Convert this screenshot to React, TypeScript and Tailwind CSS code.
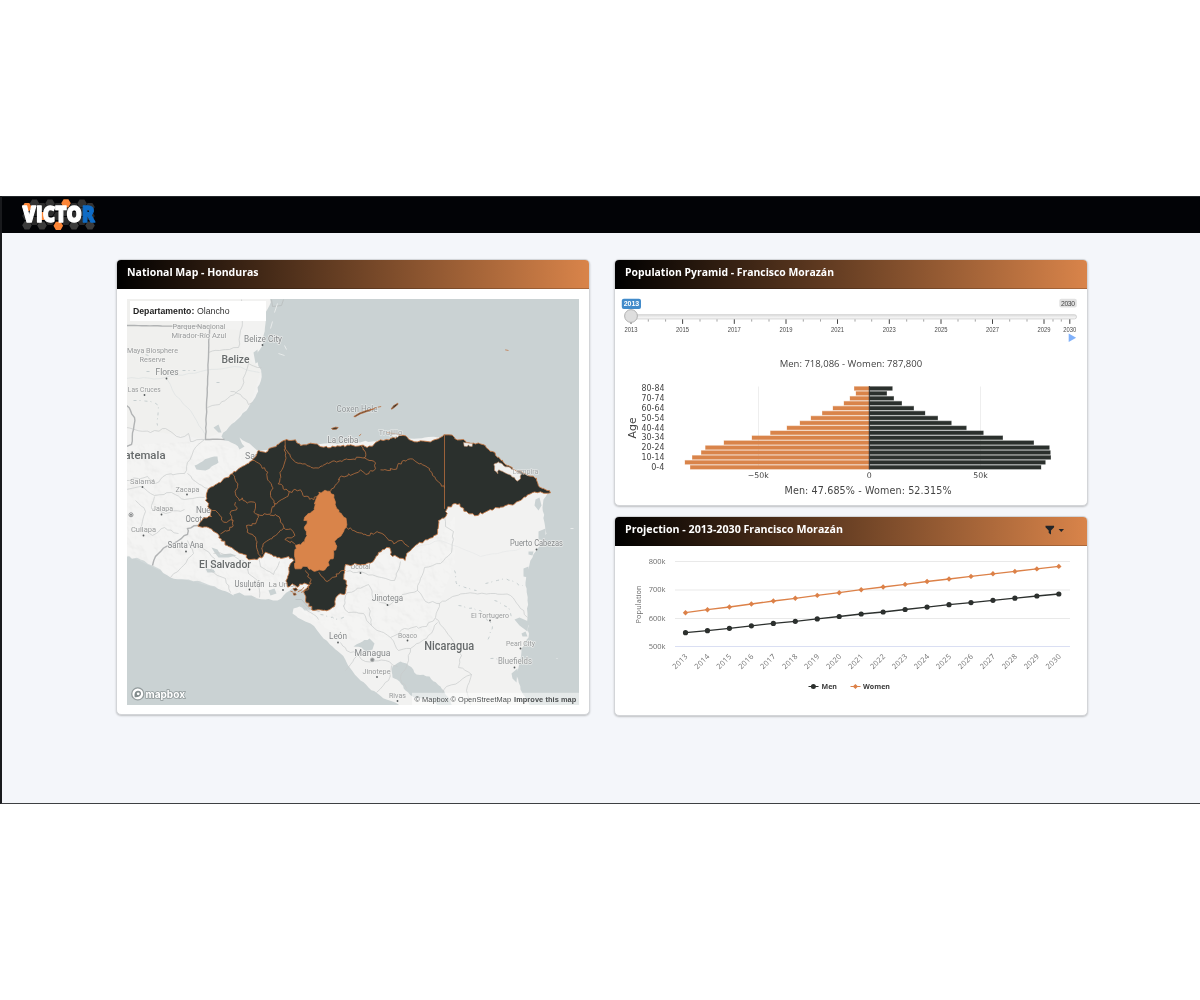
import React from "react";

type Pt = [number, number];

/** Turns "x,y x,y" into a slightly irregular path, the way natural borders run. */
function rough(src: string, amp = 3, closed = false, step = 11): string {
  const pts: Pt[] = src.trim().split(/\s+/).map((p) => p.split(",").map(Number) as Pt);
  if (closed) pts.push(pts[0]);
  let seed = Math.round(pts[0][0] * 13 + pts[0][1] * 7) + 5;
  const rnd = () => {
    seed = (seed * 16807) % 2147483647;
    return (seed % 1000) / 1000 - 0.5;
  };
  let d = `M${pts[0][0]} ${pts[0][1]}`;
  for (let i = 1; i < pts.length; i++) {
    const [ax, ay] = pts[i - 1];
    const [bx, by] = pts[i];
    const n = Math.max(1, Math.round(Math.hypot(bx - ax, by - ay) / step));
    for (let k = 1; k <= n; k++) {
      const j = k === n ? 0 : amp;
      d += `L${(ax + ((bx - ax) * k) / n + rnd() * j * 2).toFixed(1)} ${(ay + ((by - ay) * k) / n + rnd() * j * 2).toFixed(1)}`;
    }
  }
  return closed ? d + "Z" : d;
}

const LAND_N =
  "120,290 271,290 269,305 265,312 265,323 263,335 262,345 257,352 256,359 261,373 259,384 256,394 248,407 238,418 228,427 221,436 224,440 235,444 239,449 244,446 239,437 249,443 258,451 300,445 445,436 548,491 543,499 542,507 546,533 537,548 532,557 526,573 525,585 527,600 527,613 528,637 521,648 519,660 516,675 520,689 527,700 532,712 404,712 398,704 386,699 377,693 368,687 360,680 350,668 340,653 332,646 323,638 316,629 310,623 301,619 292,613 293,608 299,606 304,610 313,609 308,600 303,590 293,587 283,595 277,600 257,598 245,596 233,595 222,590 210,585 200,581 185,579 170,577 160,569 152,565 140,559 120,555";

const HONDURAS =
  "52,317 70,292 93,288 92,270 75,240 82,208 110,190 155,160 185,138 215,120 235,90 255,96 272,82 290,72 318,57 330,60 345,58 360,75 390,68 430,80 480,77 540,75 560,81 580,72 600,58 630,54 669,45 705,64 740,63 765,57 790,43 805,43 840,58 880,68 910,73 945,104 980,135 1030,160 1068,173 1078,200 1110,217 1080,214 1050,220 1020,240 1000,252 960,260 920,272 890,285 870,280 850,272 838,250 820,250 800,265 796,288 774,300 770,342 735,358 700,380 678,400 674,420 652,410 630,402 628,382 605,388 575,425 545,432 495,432 490,470 500,495 495,518 475,522 465,535 462,558 448,567 400,570 375,540 370,517 388,495 372,488 350,500 335,490 322,500 316,482 325,460 325,440 340,420 325,408 290,412 255,395 243,412 205,418 190,402 165,390 140,375 115,352 112,340 85,322";

const DEPTS = [
  "318,57 311,88 316,110 303,150 293,190 325,213 322,228 283,250 268,280",
  "345,125 323,98 313,75",
  "345,125 375,130 400,143 425,138 440,127 490,118 545,112 580,122 585,145",
  "540,75 555,95 550,112",
  "585,145 556,162 540,148 520,160 480,168 468,190 450,213",
  "600,148 640,147 665,122 690,115 740,140 765,175 792,203",
  "215,120 240,132 262,155 263,180 278,202 270,225 285,250",
  "155,160 172,190 165,220 176,240 185,232 200,248 222,245 220,275 232,282 285,282 300,298 310,322 330,325 343,345 313,357 345,372",
  "165,245 168,268 150,275 158,300 130,305 105,270 92,268",
  "158,300 155,320 120,340",
  "232,282 225,310 198,315 200,335 225,350 228,380 242,410",
  "310,322 285,345 248,370 245,400",
  "325,213 360,208 370,228 400,238 415,225",
  "497,320 520,330 560,345 590,333 615,348 640,370 665,360 685,380",
  "375,450 392,478 385,505 368,512",
  "415,455 440,483 460,470 485,450 495,450",
];

const MORAZAN =
  "415,215 440,212 452,220 460,232 464,252 475,275 490,290 497,320 484,342 468,356 466,372 460,400 458,415 443,425 440,438 428,450 400,452 380,438 362,445 342,438 342,400 345,375 372,365 380,345 372,325 380,308 370,300 382,280 402,268 405,240";

const BORDERS = [
  "126,325 208,326",
  "126,446 131,444 133,429 134,417 130,410 126,405",
  "224,439 205,439 209,325",
  "152,565 155,556 166,546 178,540 187,534 187,528 198,525",
];

const REGIONS = [
  "208,352 219,350 229,349 238,347 240,330 243,312 241,299",
  "207,407 219,404 227,398 240,389 248,363 257,367 261,367",
  "230,391 240,394 248,404 252,402",
  "126,427 150,432 165,428 180,437 188,433 190,441 204,439",
  "204,439 193,450 187,462 184,473 166,474 155,483 147,476 126,480",
  "187,473 195,481 208,488",
  "126,489 140,486 154,495 171,492 184,499 204,497",
  "135,500 145,511 140,528 152,535 164,527 178,533",
  "154,496 151,508 165,513 184,509",
  "187,540 193,553 183,565 170,577",
  "192,542 204,549 214,558 210,570 225,578 230,592",
  "213,553 231,554 243,560 248,573 257,580 259,597",
  "259,552 260,566 273,574 279,561",
  "346,571 360,571 381,577 394,580 400,561",
  "443,510 445,526 453,531 451,552 440,563 424,567 420,578 417,590 425,601 439,603 449,598 465,593 490,593 510,595 520,608 527,617",
  "417,590 402,594 388,605 373,599 368,584 347,592 343,606",
  "439,603 435,617 426,626 404,628 390,637 371,625 368,607",
  "343,605 348,612 363,613 371,625",
  "435,618 445,630 453,641 461,655 458,667 471,674 459,681 446,686 439,695",
  "390,637 398,650 410,648 408,660 400,678 406,688",
  "340,642 346,650 356,653 365,661 385,660 397,666",
  "345,670 357,655",
  "376,692 388,680 391,665",
  "410,648 426,638 437,622",
  "471,674 466,690 470,704",
  "301,604 310,612 318,619",
];

type Label = [string, number, number, number, number, "c" | "t" | "s"];
/* text, centre x, baseline y, width, size, tone */
const LABELS: Label[] = [
  ["Belize", 235, 362, 28, 11, "c"],
  ["Nicaragua", 448.7, 649, 50, 12, "c"],
  ["El Salvador", 224.5, 567.5, 52, 11, "c"],
  ["Parque Nacional", 198.5, 328, 53, 8, "t"],
  ["Mirador-Río Azul", 198.5, 337, 55, 8, "t"],
  ["Belize City", 262.5, 341, 38, 8.8, "s"],
  ["Maya Biosphere", 152, 352, 51, 8, "t"],
  ["Reserve", 152, 361, 26, 8, "t"],
  ["Flores", 166.5, 374.5, 23, 8.8, "s"],
  ["Las Cruces", 143.8, 391, 33, 7.8, "t"],
  ["Salamá", 142, 483, 25, 8, "t"],
  ["Zacapa", 187, 491, 24, 8, "t"],
  ["Jalapa", 162, 510, 21, 8, "t"],
  ["Cuilapa", 143, 531, 25, 8, "t"],
  ["Santa Ana", 185, 547.5, 36, 8.8, "s"],
  ["Usulután", 249, 586, 30, 8.3, "s"],
  ["León", 337.5, 638.5, 18, 8.8, "s"],
  ["Managua", 372, 655, 36, 9.5, "s"],
  ["Jinotepe", 376, 673.5, 28, 8, "t"],
  ["Rivas", 397, 697, 17, 8, "t"],
  ["Boaco", 407, 637, 19, 7.6, "t"],
  ["Jinotega", 387, 600.5, 31, 8.8, "s"],
  ["El Tortugero", 489.5, 617, 38, 7.8, "t"],
  ["Puerto Cabezas", 536, 545.5, 53, 8.3, "s"],
  ["Pearl City", 520, 645, 29, 7.8, "t"],
  ["Bluefields", 514.5, 663, 34, 8.2, "t"],
];
const UNDER: Label[] = [
  ["San", 252, 458.5, 15, 8.8, "s"],
  ["Nueva", 207, 512, 23, 8.8, "s"],
  ["Ocotepeque", 206, 521, 42, 8.8, "s"],
  ["La Unión", 283, 586, 30, 8, "t"],
  ["Ocotal", 360, 568.5, 20, 8, "t"],
];
const OVER: Label[] = [
  ["La Ceiba", 342.5, 442, 31, 8.5, "s"],
  ["Trujillo", 390, 434, 24, 8, "t"],
  ["Lempira", 525, 473.5, 26, 8, "t"],
];

const DOTS: Pt[] = [
  [262, 344.5], [166, 378], [144, 394.5], [142, 486.5], [186.5, 494], [161, 514], [143, 535], [185.5, 551],
  [249, 589], [282.5, 589.5], [337.5, 642], [376.5, 676.5], [397, 700.5], [407, 640], [387, 604.5],
  [489.5, 620], [536, 549], [520, 648], [514, 667], [360, 572.5],
];

function MapLabel({ l }: { l: Label }) {
  const [t, x, y, w, s, tone] = l;
  return (
    <text
      x={x - w / 2}
      y={y}
      textLength={w}
      lengthAdjust="spacingAndGlyphs"
      fontSize={s}
      fontFamily="Roboto, sans-serif"
      fontWeight={tone === "c" ? 500 : 400}
      fill={tone === "c" ? "#666a6b" : tone === "s" ? "#85888a" : "#999b9c"}
      stroke="#f5f5f4"
      strokeOpacity={0.7}
      strokeWidth={1.6}
      paintOrder="stroke"
      strokeLinejoin="round"
    >
      {t}
    </text>
  );
}

function HondurasMap() {
  return (
    <svg className="block h-[406px] w-[452px]" viewBox="126.5 298.5 452 406">
      <defs>
        <filter id="relief" x="0" y="0" width="100%" height="100%">
          <feTurbulence type="fractalNoise" baseFrequency="0.07" numOctaves="4" seed="8" />
          <feDiffuseLighting lightingColor="#ffffff" surfaceScale="2.4" diffuseConstant="1.1">
            <feDistantLight azimuth="315" elevation="60" />
          </feDiffuseLighting>
        </filter>
        <clipPath id="highlands">
          <path d="M126 445L205 440L255 455L210 490L200 525L235 555L285 560L283 593L233 592L170 575L126 554Z" />
          <path d="M345 570L385 553L402 560L440 535L455 515L455 560L440 600L430 640L400 640L350 640L320 625L300 610L345 600Z" />
        </clipPath>
      </defs>
      <rect x="126" y="298" width="453" height="407" fill="#cad2d3" />
      <path d={rough(LAND_N, 0.9, true, 4)} fill="#f2f2f1" />
      <path
        d="M208 326L240 330L240 350L261 370L250 403L225 430L206 438Z M126 298h82v141l-82-12Z"
        fill="#eeeeed"
        opacity="0.6"
      />
      <g clipPath="url(#highlands)">
        <rect x="126" y="430" width="340" height="230" filter="url(#relief)" opacity="0.16" style={{ mixBlendMode: "multiply" }} />
      </g>
      <g fill="#cad2d3">
        <path d={rough("194,465 200,462 207,458 217,456 218,462 211,466 205,470 196,469", 0.8, true, 3)} />
        <path d={rough("353,646 362,641 369,638 374,643 372,649 366,652 361,647", 0.8, true, 3)} />
        <path d={rough("392,666 400,661 408,665 416,674 429,676 440,686 448,697 452,706 440,706 428,698 415,698 405,690 399,681 392,677", 0.8, true, 3)} />
        <path d="M211 547l6 2 3 5 10-1 6 2-8 2-10 0-4-5Z M205 568l8 1 2 3-8 0Z M213 427l5-3 3 8-3 0Z M253 352l4-3 1 12-3 2Z" />
        <path d="M535 499l4-2 2 8-3 5-4-5Z M538 531l7-3 0 12-7-1Z M523 568l5-2 0 11-5-1Z M528 551l5 0-1 4-4-1Z M514 619l5-2 9 4-1 10-8-6Z M511 673l6-5-1 14-4-4Z M521 633l4-2 2 5-5 0Z" />
        <path d="M233 594l6-2 5 3 7 0 6 3-8 1-16-2Z M268 590l6-2 2 5-6 2Z" />
      </g>
      <g fill="none" stroke="#dfe3e3" strokeWidth="0.8">
        <path d={rough("126,378 160,378 200,371 234,366 259,372", 1, false, 6)} />
        <path d={rough("166,378 175,395 190,410 205,435", 1, false, 6)} />
        <path d={rough("405,550 440,540 480,556 520,548", 1, false, 6)} stroke="#e9eaea" />
      </g>
      <g fill="none" stroke="#c9cbcc" strokeWidth="0.7">
        {REGIONS.map((r) => (
          <path key={r} d={rough(r, 1.1, false, 4)} />
        ))}
      </g>
      <g fill="none" stroke="#c1cacb" strokeWidth="0.9" strokeDasharray="3 3 1 4">
        <path d={rough("133,400 150,401 158,405 157,425", 1, false, 4)} />
        <path d={rough("454,570 457,585 476,590", 1, false, 4)} />
        <path d={rough("485,583 505,578 522,585", 1, false, 4)} />
        <path d={rough("458,605 480,610 492,625 487,640", 1, false, 4)} />
        <path d={rough("494,600 508,607 512,618", 1, false, 4)} />
        <path d={rough("490,658 505,661 517,659", 1, false, 4)} />
        <path d={rough("320,614 335,619 345,616", 1, false, 4)} />
        <path d="M146 371h6M171 370h24M216 382h6M148 355l-10-3" />
      </g>
      <g fill="none" stroke="#b1b3b4" strokeWidth="1.4">
        {BORDERS.map((r, i) => (
          <path key={r} d={rough(r, i === 0 ? 0.1 : i === 2 ? 0.3 : 0.9, false, 4)} />
        ))}
      </g>
      <g fill="none" stroke="#b9bdbe" strokeWidth="0.8">
        <path d="M271 299l1 7 9-1 2-6" />
        <path d="M295 599h6l8 9 10 3" />
      </g>
      <g fill="none" stroke="#e8ebeb" strokeWidth="1">
        <path d="M277 303l-3 9M272 321l-2 7M284 345l2 4M278 353l6 2M570 528h3M556 658h1" />
      </g>

      {UNDER.map((l) => <MapLabel key={l[0]} l={l} />)}
      {LABELS.map((l) => <MapLabel key={l[0]} l={l} />)}
      <text x="124" y="458" textLength="41" lengthAdjust="spacingAndGlyphs" fontSize="11" fontWeight="500" fontFamily="Roboto, sans-serif" fill="#666a6b">
        atemala
      </text>
      <text x="336" y="411" textLength="41" lengthAdjust="spacingAndGlyphs" fontSize="8.5" fontFamily="Roboto, sans-serif" fill="#919698" stroke="#e3e7e7" strokeWidth="1.2" paintOrder="stroke">
        Coxen Hole
      </text>
      {DOTS.map(([x, y]) => (
        <circle key={`${x}-${y}`} cx={x} cy={y} r="0.9" fill="#55595a" />
      ))}
      <circle cx="130.5" cy="514.3" r="2" fill="#fff" stroke="#77797a" strokeWidth="0.8" />
      <circle cx="130.5" cy="514.3" r="0.9" fill="#55595a" />
      <circle cx="371.8" cy="659.3" r="1.9" fill="#8b8e8f" stroke="#b5b7b8" strokeWidth="0.8" />

      <g transform="translate(180 420) scale(0.33333)" strokeLinejoin="round">
        <path d={rough(HONDURAS, 3.6, true, 7)} fill="#2b302d" stroke="#c97a45" strokeWidth="2.6" />
        <g fill="none" stroke="#b56d3d" strokeWidth="2.5">
          {DEPTS.map((r) => (
            <path key={r} d={rough(r, 4, false, 7)} />
          ))}
          <path d="M792 43V265" />
        </g>
        <path d={rough(MORAZAN, 5, true, 8)} fill="#d9844a" stroke="#d9844a" strokeWidth="2" />
        <g fill="#2b302d" stroke="#b96c3b" strokeWidth="2.4">
          <path d="M338 505l9-3 4 6-8 4ZM338 518l7 0 2 5-7 1Z" />
          <path d="M352 514l13-7 5-7M362 516l12-6M330 512l8 3" fill="none" />
          <path d="M453 24l12-4 8 1-5 5-11 1Z" />
          <path d="M520 -12l16 -10 22 -8 22 -5-20 8-20 7-16 9Z" />
          <path d="M580 -36l8-3M592 -40l10-2M536 46l6-5" fill="none" />
          <path d="M632 -35l8 -10 12 -7 0 4-8 7-10 7Z" />
          <path d="M620 36l30 5 20 4" fill="none" />
        </g>
        <path d="M974 -212l10 2" stroke="#c48c66" strokeWidth="3" />
        <path d="M634 44l6 6 8-4 3 6 4-7-9-5Z" fill="#ececeb" />
        <path
          d={rough("940,132 953,124 962,128 975,139 990,142 1010,153 1022,162 1020,175 1010,182 998,170 985,162 965,152 955,148 952,160 942,150", 2, true, 6)}
          fill="#f0f0ef"
          stroke="#c58a62"
          strokeWidth="1.8"
        />
        <path d="M849 66l27 3-1 9-8-1-3-4-4 5-9-1Z" fill="#f0f0ef" stroke="#c58a62" strokeWidth="1.5" />
      </g>
      {OVER.map((l) => (
        <g key={l[0]} opacity={l[0] === "La Ceiba" ? 1 : 0.75}>
          <MapLabel l={l} />
        </g>
      ))}

      <g stroke="#7b8485" strokeOpacity="0.75" strokeWidth="1.3" fill="#fff">
        <circle cx="137.3" cy="693.4" r="6" />
        <path d="M134.2 696.7c-.6-3.3.2-6 3-6.4 2.4-.3 3.8 1.5 3.3 3.5-.6 2.3-3.4 3.3-6.3 2.9Z" fill="#828b8c" stroke="none" />
        <circle cx="137.7" cy="693.3" r="1.4" stroke="none" />
        <text x="145" y="697" textLength="39.5" lengthAdjust="spacingAndGlyphs" fontFamily="Inter, sans-serif" fontWeight="700" fontSize="10.5" strokeWidth="1.5" paintOrder="stroke">
          mapbox
        </text>
      </g>
      <rect x="411.5" y="692.3" width="167.5" height="12.4" fill="#fff" fillOpacity="0.5" />
      <g fontFamily="Liberation Sans, sans-serif" fontSize="7.4" fill="#4c4f50">
        <text x="414" y="701" textLength="34">© Mapbox</text>
        <text x="450" y="701" textLength="60.5">© OpenStreetMap</text>
        <text x="513.5" y="701" textLength="62.3" fontWeight="700">Improve this map</text>
      </g>
    </svg>
  );
}

const HEXES: [number, number, string][] = [
  [27, 207, "#fb8537"], [34.5, 203.5, "#333"], [42, 207, "#2b2b2b"], [50, 203.5, "#333"], [58, 207, "#2b2b2b"],
  [66, 203.3, "#fb8537"], [74, 207, "#2b2b2b"], [82, 203.5, "#333"], [90, 207, "#333"],
  [27, 216, "#2b2b2b"], [34.5, 212, "#222"], [42, 216, "#fb8537"], [50, 212, "#2b2b2b"], [58, 216, "#2b2b2b"],
  [66, 212, "#333"], [74, 216, "#2b2b2b"], [82, 212, "#333"], [90, 216, "#2b2b2b"],
  [27, 225.3, "#3b3b3b"], [42, 225.5, "#3b3b3b"], [34.5, 221, "#2b2b2b"], [50, 221, "#2b2b2b"],
  [58.3, 225.8, "#fb8537"], [66, 221, "#2b2b2b"], [74, 225.5, "#3b3b3b"], [82, 221, "#2b2b2b"], [90, 225.5, "#3b3b3b"],
];

function Logo() {
  return (
    <svg className="h-[34px] w-[80px]" viewBox="20 198 80 34">
      {HEXES.map(([x, y, c]) => (
        <path key={`${x}-${y}`} d={`M${x - 4.8} ${y}l2.4-4.1h4.8l2.4 4.1-2.4 4.1h-4.8Z`} fill={c} />
      ))}
      <text
        x="22.6"
        y="222.4"
        textLength="72.3"
        lengthAdjust="spacingAndGlyphs"
        fontFamily="Open Sans, sans-serif"
        fontWeight="800"
        fontSize="22.6"
        strokeWidth="1.3"
        strokeLinejoin="round"
        fill="#fff"
        stroke="#fff"
      >
        VICTO
        <tspan fill="#0f6cc6" stroke="#0f6cc6">R</tspan>
      </text>
    </svg>
  );
}

function Card({ title, width, className, action, children }: { title: string; width: number; className: string; action?: React.ReactNode; children: React.ReactNode }) {
  return (
    <section className={`flex w-[474px] flex-col overflow-hidden rounded-[5px] border border-[#d3d5d8] bg-white shadow-[0_1px_2px_rgba(0,0,0,0.22)] ${className}`}>
      <header className="flex h-[29px] shrink-0 items-center justify-between border-b border-black/20 bg-[linear-gradient(90deg,#000000,#d9844a)] pr-[22px] pl-[10px]">
        <h2 className="mb-[5px]">
          <svg className="block h-[16px] w-[260px]" viewBox="0 0 260 16">
            <text x="0" y="11.5" textLength={width} lengthAdjust="spacingAndGlyphs" fontFamily="Open Sans, Noto Sans, sans-serif" fontWeight="700" fontSize="11" fill="#fff">
              {title}
            </text>
          </svg>
        </h2>
        {action}
      </header>
      {children}
    </section>
  );
}

const TICKS = [
  [631, "2013"], [682.6, "2015"], [734.3, "2017"], [786, "2019"], [837.5, "2021"], [889.3, "2023"],
  [941, "2025"], [992.5, "2027"], [1044, "2029"], [1069.8, "2030"],
] as [number, string][];
const MINOR = [648.3, 665.6, 700, 717, 751.7, 769, 803.3, 820.5, 855, 871.7, 906.7, 923.7, 958, 975.3, 1009.7, 1027, 1053, 1061.3];

function YearSlider() {
  return (
    <svg className="block h-[50px] w-[471px]" viewBox="616 295 471 50" fontFamily="Liberation Sans, sans-serif">
      <defs>
        <linearGradient id="rail" x1="0" y1="0" x2="0" y2="1">
          <stop offset="0" stopColor="#dddddd" />
          <stop offset="1" stopColor="#fcfcfc" />
        </linearGradient>
      </defs>
      <rect x="625.5" y="314.7" width="451" height="4.2" rx="2" fill="url(#rail)" stroke="#cccccc" strokeWidth="0.8" />
      {TICKS.map(([x, t]) => (
        <g key={t}>
          <path d={`M${x} 319.3v4.6`} stroke="#444" strokeWidth="1" />
          <text x={x - 6.5} y="331.5" textLength="13" lengthAdjust="spacingAndGlyphs" fontSize="6.3" fill="#4a4a4a">{t}</text>
        </g>
      ))}
      {MINOR.map((x) => (
        <path key={x} d={`M${x} 319.3v2.3`} stroke="#999" strokeWidth="0.9" />
      ))}
      <rect x="621.8" y="298.7" width="19.2" height="10.3" rx="2" fill="#428bca" />
      <text x="623.8" y="306.2" textLength="15.3" fontSize="7" fontWeight="700" fill="#fff">2013</text>
      <rect x="1059.3" y="298.7" width="17.5" height="8.8" rx="2" fill="#e1e1e1" />
      <text x="1061" y="305.7" textLength="14" fontSize="6.8" fill="#444">2030</text>
      <circle cx="631" cy="316" r="6.4" fill="#dedede" stroke="#ababab" strokeWidth="0.9" />
      <path d="M1068.7 333.6l7.4 4.1-7.4 4.3Z" fill="#80b1fb" />
    </svg>
  );
}

const LEFT = [854.3, 856, 850, 844, 833, 822.3, 811, 800, 787, 770.5, 752, 724, 705.5, 701.3, 692.3, 685, 690.3];
const RIGHT = [892.3, 886.7, 893.7, 901.7, 913.7, 925, 937.7, 951.3, 966.3, 983.3, 1002.7, 1033.7, 1049.3, 1050.3, 1050.7, 1045.3, 1041];
const AGES = ["80-84", "70-74", "60-64", "50-54", "40-44", "30-34", "20-24", "10-14", "0-4"];

function Pyramid() {
  return (
    <svg className="block h-[155px] w-[471px]" viewBox="616 347 471 155" fontFamily="DejaVu Sans, sans-serif" fill="#444">
      <text x="779.7" y="366.6" textLength="142.5" lengthAdjust="spacingAndGlyphs" fontFamily="Open Sans, sans-serif" fontSize="9.8">
        Men: 718,086 - Women: 787,800
      </text>
      <path d="M758.5 386.5V469M980.5 386.5V469" stroke="#eee" />
      {LEFT.map((l, i) => {
        const y = 388.4 + i * 4.925;
        return (
          <g key={l}>
            <rect x={l - 0.3} y={y - 2.3} width={869.3 - l} height="4.7" fill="#d9844a" opacity="0.45" />
            <rect x={l} y={y - 1.7} width={869.3 - l} height="3.6" fill="#d9844a" />
            <rect x="869.3" y={y - 2.3} width={RIGHT[i] - 869} height="4.7" fill="#2b302d" opacity="0.45" />
            <rect x="869.3" y={y - 1.7} width={RIGHT[i] - 869.3} height="3.6" fill="#2b302d" />
          </g>
        );
      })}
      <path d="M869.3 386V469.5" stroke="#333" />
      {AGES.map((a, i) => {
        const w = i === 8 ? 13.2 : 22.8;
        return (
          <text key={a} x={664.4 - w} y={391.2 + i * 9.85} fontSize="8" textLength={w} lengthAdjust="spacingAndGlyphs">{a}</text>
        );
      })}
      <g fontSize="7.8" textAnchor="middle">
        <text x="758.3" y="478">−50k</text>
        <text x="869.3" y="478">0</text>
        <text x="980.5" y="478">50k</text>
      </g>
      <text transform="translate(636.2 438.4) rotate(-90)" fontSize="10.6" textLength="21" lengthAdjust="spacingAndGlyphs">Age</text>
      <text x="784.5" y="493.6" textLength="167" fontSize="9.6">Men: 47.685% - Women: 52.315%</text>
    </svg>
  );
}

const WOMEN = [612.7, 609.7, 607, 604, 601, 598.3, 595.4, 592.7, 589.7, 587, 584.4, 581.5, 579, 576.4, 573.8, 571.4, 568.9, 566.4];
const MEN = [632.7, 630.7, 628.3, 625.8, 623.4, 621.3, 618.9, 616.5, 614, 612, 609.5, 607.1, 604.7, 602.6, 600.3, 598.2, 596, 594];
const YX = (i: number) => 685.5 + i * 21.96;

function Projection() {
  return (
    <svg className="block h-[165px] w-[471px]" viewBox="616 547 471 165" fontFamily="Open Sans, sans-serif">
      <path d="M675 561.5H1070M675 590H1070M675 618.5H1070" stroke="#e9e9e9" />
      <path d="M675 646.5H1070" stroke="#dadff3" />
      {["800k", "700k", "600k", "500k"].map((t, i) => (
        <text key={t} x="648.8" y={564 + i * 28.4} textLength="16.7" lengthAdjust="spacingAndGlyphs" fontSize="7.2" fill="#6c6c6c">{t}</text>
      ))}
      <text transform="translate(640.5 623.4) rotate(-90)" fontSize="7.3" textLength="38" fill="#6c6c6c">Population</text>
      <polyline points={MEN.map((y, i) => `${YX(i)},${y}`).join(" ")} fill="none" stroke="#2c302e" strokeWidth="1.3" />
      <polyline points={WOMEN.map((y, i) => `${YX(i)},${y}`).join(" ")} fill="none" stroke="#dc8148" strokeWidth="1.3" />
      {MEN.map((y, i) => <circle key={i} cx={YX(i)} cy={y} r="2.6" fill="#2c302e" />)}
      {WOMEN.map((y, i) => <path key={i} d={`M${YX(i)} ${y - 2.7}l2.7 2.7-2.7 2.7-2.7-2.7Z`} fill="#dc8148" />)}
      {WOMEN.map((_, i) => (
        <text key={i} transform={`translate(${YX(i) + 2.6} 657) rotate(-45)`} textAnchor="end" fontSize="7.4" textLength="17.8" fill="#6c6c6c">
          {2013 + i}
        </text>
      ))}
      <path d="M808.5 686.5h10" stroke="#2c302e" strokeWidth="1.2" />
      <circle cx="813.4" cy="686.5" r="2.5" fill="#2c302e" />
      <path d="M850.5 686.5h10" stroke="#dc8148" strokeWidth="1.2" />
      <path d="M855.4 683.9l2.6 2.6-2.6 2.6-2.6-2.6Z" fill="#dc8148" />
      <g fontSize="7.3" fontWeight="700" fill="#3a3a3a">
        <text x="821.5" y="689.2" textLength="15.5" lengthAdjust="spacingAndGlyphs">Men</text>
        <text x="863" y="689.2" textLength="27" lengthAdjust="spacingAndGlyphs">Women</text>
      </g>
    </svg>
  );
}

export default function App() {
  return (
    <div className="flex h-[1000px] w-[1200px] flex-col overflow-hidden bg-white pt-[196px]">
      <div className="flex h-[608px] flex-col border-b border-l-2 border-b-[#3e4043] border-l-[#191a1d] bg-[#f4f6fa]">
        <nav className="flex h-[37px] shrink-0 items-center border-t border-[#23272a] bg-[#020306] pl-[18px]">
          <Logo />
        </nav>
        <main className="flex gap-[24px] pt-[26px] pl-[114px]">
          <Card title="National Map - Honduras" width={131.5} className="h-[456px]">
            <div className="relative pt-[9.5px] pl-[9.5px]">
              <HondurasMap />
              <div className="absolute top-[12px] left-[13px] flex h-[20px] w-[136px] items-center bg-white pl-[3px]">
                <svg className="block h-[14px] w-[110px]" viewBox="0 0 110 14" fontFamily="Liberation Sans, sans-serif" fontSize="8.8" fill="#333">
                  <text x="0" y="10.2" textLength="61.3" lengthAdjust="spacingAndGlyphs" fontWeight="700" fill="#222">Departamento:</text>
                  <text x="64" y="10.2" textLength="32.5" lengthAdjust="spacingAndGlyphs">Olancho</text>
                </svg>
              </div>
            </div>
          </Card>
          <div className="flex flex-col gap-[10px]">
            <Card title="Population Pyramid - Francisco Morazán" width={209} className="h-[247px]">
              <div className="flex flex-col gap-[2px] pt-[6px] pl-px">
                <YearSlider />
                <Pyramid />
              </div>
            </Card>
            <Card
              title="Projection - 2013-2030 Francisco Morazán"
              width={218}
              className="h-[200px]"
              action={
                <svg className="mb-[2px] h-[10px] w-[20px]" viewBox="0 0 20 10" fill="#222529">
                  <path d="M0.5 0.8h8.6v1.5L6 5.4v4L3.7 8V5.4L0.5 2.3Z" />
                  <path d="M13.6 4h5.4l-2.7 2.9Z" />
                </svg>
              }
            >
              <div className="pt-[1px] pl-px">
                <Projection />
              </div>
            </Card>
          </div>
        </main>
      </div>
    </div>
  );
}
